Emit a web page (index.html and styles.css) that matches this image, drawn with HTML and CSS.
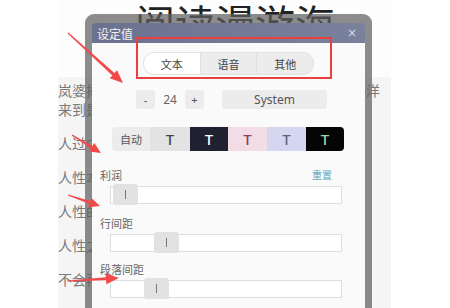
FILE: index.html
```html
<!DOCTYPE html>
<html lang="zh">
<head>
  <meta charset="UTF-8">
  <meta name="viewport" content="width=device-width, initial-scale=1.0">
  <title>设定值</title>
  <link rel="stylesheet" href="styles.css">
</head>
<body>
  <!-- 背后的文章页面 -->
  <div class="page">
    <div class="page-head">
      <h1 class="title">阅读漫游海</h1>
    </div>
    <div class="article">
      <p>岚婆掉进了海里，朋友们都很着急，纷纷赶来袭手洋来到是非之地。</p>
      <p>人过中年才明白</p>
      <p>人性本善</p>
      <p>人性的弱点</p>
      <p>人性之美</p>
      <p>不会再回头</p>
    </div>
  </div>

  <!-- 设定值弹窗 -->
  <div class="modal">
    <div class="dialog-head">
      <span class="dialog-title">设定值</span>
      <span class="close">×</span>
    </div>
    <div class="dialog-body">
      <div class="tabs">
        <span class="tab active">文本</span>
        <span class="tab">语音</span>
        <span class="tab">其他</span>
      </div>

      <div class="size-row">
        <span class="btn small">-</span>
        <span class="size-value">24</span>
        <span class="btn small">+</span>
        <span class="btn font-btn">System</span>
      </div>

      <div class="themes">
        <span class="theme auto">自动</span>
        <span class="theme light">T</span>
        <span class="theme dark">T</span>
        <span class="theme pink">T</span>
        <span class="theme lavender">T</span>
        <span class="theme black">T</span>
      </div>

      <div class="field-label first">
        <span>利润</span>
        <span class="reset">重置</span>
      </div>
      <div class="slider"><span class="thumb" style="left: 2px"></span></div>

      <div class="field-label">
        <span>行间距</span>
      </div>
      <div class="slider"><span class="thumb" style="left: 43px"></span></div>

      <div class="field-label last">
        <span>段落间距</span>
      </div>
      <div class="slider"><span class="thumb" style="left: 33px"></span></div>
    </div>
  </div>

  <!-- 标注：红框和箭头 -->
  <svg class="annot" width="450" height="308" viewBox="0 0 450 308">
    <rect x="137" y="38" width="194" height="40" fill="none" stroke="#ee3f3f" stroke-width="2"/>
    <polygon points="67.6,33.4 112.4,75.4 109.7,78.3 123,83 117.1,70.2 114.4,73.1 68.4,32.6"/>
    <polygon points="71.7,135.5 90.9,148.5 89,151.4 101,153 94.3,142.9 92.4,145.9 72.3,134.5"/>
    <polygon points="67.8,195.6 89.1,203.8 88,207.2 100,206 91.2,197.7 90.1,201 68.2,194.4"/>
    <polygon points="67,281.6 106.1,280.2 106.3,284.2 119,278 105.7,273.2 105.9,277.2 67,280.4"/>
  </svg>
</body>
</html>
```

FILE: styles.css
```css
body {
  margin: 0;
  width: 450px;
  height: 308px;
  overflow: hidden;
  position: relative;
  background: #fff;
  font-family: "Noto Sans CJK SC", "Noto Sans", sans-serif;
}

/* 背后的文章 */
.page {
  margin-left: 58px;
  width: 333px;
  height: 308px;
  display: flex;
  flex-direction: column;
}

.page-head {
  height: 77px;
  background: #fdfdfd;
}

.title {
  margin: 0;
  padding-left: 77px;
  font-size: 40px;
  line-height: 44px;
  font-weight: 400;
  color: #222;
}

.article {
  flex: 1;
  background: #f5f5f5;
  padding-top: 4px;
}

.article p {
  margin: 0 0 15px;
  font-size: 14px;
  line-height: 19px;
  color: #7a7a7a;
}

/* 弹窗 */
.modal {
  position: absolute;
  left: 85px;
  top: 14px;
  width: 273px;
  height: 300px;
  padding: 9px 7px 0;
  background: rgba(95, 95, 95, 0.72);
  border-radius: 9px 9px 0 0;
  display: flex;
  flex-direction: column;
}

.dialog-head {
  height: 20px;
  display: flex;
  align-items: center;
  justify-content: space-between;
  padding: 0 8px 0 5px;
  background: linear-gradient(to right, #6b7290, #7a819c);
  border-radius: 4px 4px 0 0;
}

.dialog-title {
  font-size: 12px;
  color: #f2f2f2;
}

.close {
  font-family: "DejaVu Sans", sans-serif;
  font-size: 12px;
  color: #d8dbe6;
}

.dialog-body {
  flex: 1;
  background: #fafafa;
  padding-top: 9px;
}

/* 选项卡 */
.tabs {
  display: flex;
  width: 171px;
  height: 23px;
  margin: 0 auto;
  box-sizing: border-box;
  border: 1px solid #e2e2e2;
  border-radius: 11px;
  overflow: hidden;
  background: #ececec;
}

.tab {
  flex: 1;
  display: flex;
  align-items: center;
  justify-content: center;
  font-size: 11px;
  color: #444;
}

.tab + .tab {
  border-left: 1px solid #e0e0e0;
}

.tab.active {
  background: #fff;
}

/* 字号 */
.size-row {
  display: flex;
  align-items: center;
  margin: 15px 0 0 44px;
  height: 19px;
}

.btn {
  display: flex;
  align-items: center;
  justify-content: center;
  height: 19px;
  background: #ececec;
  border-radius: 3px;
  color: #555;
  font-family: "Noto Sans", sans-serif;
}

.btn.small {
  width: 19px;
  font-size: 11px;
}

.size-value {
  width: 30px;
  text-align: center;
  font-size: 12px;
  color: #666;
  font-family: "Noto Sans", sans-serif;
}

.font-btn {
  width: 105px;
  margin-left: 18px;
  font-size: 12px;
}

/* 主题 */
.themes {
  display: flex;
  margin: 18px 0 0 20px;
  height: 24px;
}

.theme {
  width: 39px;
  display: flex;
  align-items: center;
  justify-content: center;
  font-family: "Noto Sans", sans-serif;
  font-size: 15px;
  font-weight: 500;
}

.theme.auto {
  width: 38px;
  background: #ececec;
  color: #555;
  font-size: 11px;
  font-weight: 400;
  font-family: "Noto Sans CJK SC", sans-serif;
  border-radius: 4px 0 0 4px;
}

.theme.light {
  width: 40px;
  background: #e3e3e3;
  color: #444;
}

.theme.dark {
  width: 38px;
  background: #1f2030;
  color: #fff;
}

.theme.pink {
  background: #f2dde7;
  color: #8b3d62;
}

.theme.lavender {
  background: #d5d7f0;
  color: #5d6182;
}

.theme.black {
  width: 38px;
  background: #050505;
  color: #9fd9a8;
  border-radius: 0 4px 4px 0;
}

/* 滑块 */
.field-label {
  display: flex;
  justify-content: space-between;
  margin-top: 12px;
  padding: 0 33px 0 8px;
  font-size: 11px;
  line-height: 14px;
  color: #666;
}

.field-label.first {
  margin-top: 17px;
}

.field-label.last {
  margin-top: 10px;
}

.reset {
  font-size: 10px;
  color: #5aa8c0;
}

.slider {
  position: relative;
  width: 232px;
  height: 18px;
  margin: 4px 0 0 18px;
  box-sizing: border-box;
  background: #fff;
  border: 1px solid #dedede;
}

.thumb {
  position: absolute;
  top: -3px;
  width: 25px;
  height: 21px;
  background: #e2e2e2;
  border-radius: 3px;
}

.thumb::after {
  content: "";
  position: absolute;
  left: 12px;
  top: 6px;
  width: 1px;
  height: 9px;
  background: #777;
}

/* 标注 */
.annot {
  position: absolute;
  left: 0;
  top: 0;
  pointer-events: none;
}

.annot polygon {
  fill: #f24a4a;
}
```
